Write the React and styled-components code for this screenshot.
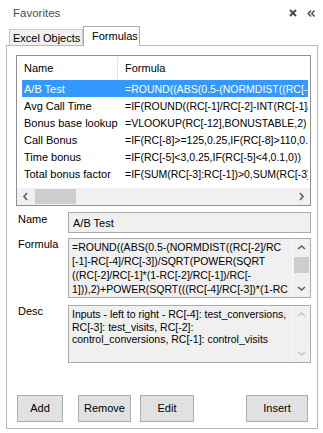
import React from "react";
import styled, { createGlobalStyle } from "styled-components";

const GlobalStyle = createGlobalStyle`
  html, body {
    margin: 0;
    padding: 0;
    background: #ffffff;
  }
  body {
    font-family: "Liberation Sans", Arial, sans-serif;
    font-size: 11px;
    color: #000;
  }
`;

const Window = styled.div`
  width: 323px;
  height: 433px;
  display: flex;
  flex-direction: column;
  background: #ffffff;
  overflow: hidden;
`;

const TitleBar = styled.div`
  height: 26px;
  display: flex;
  align-items: center;
  padding: 0 8px 0 13px;
`;

const Title = styled.span`
  flex: 1;
  font-size: 11.5px;
  color: #4d4d4d;
`;

const TitleIcon = styled.svg`
  display: block;
  margin-left: ${(p) => p.$gap || 0}px;
`;

const TabStrip = styled.div`
  height: 19px;
  display: flex;
  align-items: flex-end;
  padding-left: 9px;
`;

const Tab = styled.div`
  box-sizing: border-box;
  width: ${(p) => p.$width}px;
  height: ${(p) => (p.$active ? 20 : 16)}px;
  margin-bottom: ${(p) => (p.$active ? -1 : 0)}px;
  border: 1px solid ${(p) => (p.$active ? "#acacac" : "#c9c9c9")};
  border-bottom: none;
  background: ${(p) => (p.$active ? "#ffffff" : "#f0f0f0")};
  display: flex;
  align-items: center;
  padding-left: ${(p) => (p.$active ? 8 : 3)}px;
  padding-bottom: ${(p) => (p.$active ? 1 : 0)}px;
  font-size: 11px;
  color: #000;
  position: relative;
  z-index: ${(p) => (p.$active ? 1 : 0)};
  white-space: nowrap;
`;

const Panel = styled.div`
  box-sizing: border-box;
  margin: 0 5px 0 6px;
  height: 384px;
  border: 1px solid #b9b9b9;
  padding: 9px 6px 6px 9px;
  display: flex;
  flex-direction: column;
`;

const ListView = styled.div`
  box-sizing: border-box;
  width: 295px;
  height: 151px;
  border: 1px solid #8f8f8f;
  background: #fff;
  display: flex;
  flex-direction: column;
`;

const ListBody = styled.div`
  flex: 1;
  padding: 0 2px 0 5px;
  overflow: hidden;
`;

const HeaderRow = styled.div`
  height: 24px;
  display: flex;
  align-items: center;
`;

const HeaderCell = styled.div`
  box-sizing: border-box;
  width: ${(p) => (p.$first ? "96px" : "auto")};
  flex: ${(p) => (p.$first ? "none" : 1)};
  height: 23px;
  display: flex;
  align-items: center;
  padding-left: ${(p) => (p.$first ? 2 : 7)}px;
  border-right: ${(p) => (p.$first ? "1px solid #e5e5e5" : "none")};
`;

const Row = styled.div`
  height: 17px;
  display: flex;
  align-items: center;
  background: ${(p) => (p.$selected ? "#3399ff" : "transparent")};
  color: ${(p) => (p.$selected ? "#ffffff" : "#000000")};
  white-space: nowrap;
  overflow: hidden;
`;

const Cell = styled.div`
  box-sizing: border-box;
  width: ${(p) => (p.$first ? "96px" : "auto")};
  flex: ${(p) => (p.$first ? "none" : 1)};
  padding-left: ${(p) => (p.$first ? 2 : 7)}px;
  font-size: ${(p) => (p.$first ? 11 : 10.5)}px;
  overflow: hidden;
  white-space: nowrap;
`;

const HScroll = styled.div`
  height: 17px;
  display: flex;
  background: #f0f0f0;
`;

const ScrollButton = styled.div`
  width: 17px;
  height: 17px;
  flex: none;
  display: flex;
  align-items: center;
  justify-content: center;
`;

const HTrack = styled.div`
  flex: 1;
  display: flex;
  align-items: center;
`;

const HThumb = styled.div`
  width: 41px;
  height: 15px;
  margin-left: 1px;
  background: #cdcdcd;
`;

const FieldGrid = styled.div`
  display: grid;
  grid-template-columns: 52px 243px;
  margin-top: ${(p) => p.$top || 0}px;
`;

const Label = styled.div`
  padding-left: 2px;
  padding-top: ${(p) => p.$top || 0}px;
  line-height: 13px;
`;

const TextBox = styled.div`
  box-sizing: border-box;
  height: ${(p) => p.$height}px;
  border: 1px solid #acacac;
  background: #f0f0f0;
  display: flex;
`;

const SingleLine = styled.div`
  flex: 1;
  padding-left: 4px;
  display: flex;
  align-items: center;
  white-space: nowrap;
`;

const MultiText = styled.div`
  flex: 1;
  padding: ${(p) => p.$pad}px 0 0 3px;
  font-size: 10.5px;
  line-height: ${(p) => p.$lh}px;
  white-space: pre;
  overflow: hidden;
`;

const VScroll = styled.div`
  width: 17px;
  flex: none;
  display: flex;
  flex-direction: column;
  background: #f0f0f0;
  border-left: 1px solid #fafafa;
`;

const VTrack = styled.div`
  flex: 1;
  display: flex;
  justify-content: center;
`;

const VThumb = styled.div`
  width: 15px;
  height: 16px;
  margin-top: 1px;
  background: #cdcdcd;
`;

const ButtonRow = styled.div`
  margin-top: auto;
  display: flex;
`;

const Button = styled.div`
  box-sizing: border-box;
  width: ${(p) => p.$width}px;
  height: 27px;
  margin-left: ${(p) => p.$left}px;
  border: 1px solid #adadad;
  background: #e1e1e1;
  display: flex;
  align-items: center;
  justify-content: center;
  padding-bottom: 2px;
`;

function Chevron({ dir, color = "#606060" }) {
  const pts = {
    left: "5,1 2,4.5 5,8",
    right: "2,1 5,4.5 2,8",
    up: "1,5 4.5,2 8,5",
    down: "1,2 4.5,5 8,2",
  }[dir];
  const horizontal = dir === "left" || dir === "right";
  return (
    <svg
      width={horizontal ? 7 : 9}
      height={horizontal ? 9 : 7}
      viewBox={horizontal ? "0 0 7 9" : "0 0 9 7"}
    >
      <polyline points={pts} fill="none" stroke={color} strokeWidth="1.6" />
    </svg>
  );
}

const formulas = [
  ["A/B Test", "=ROUND((ABS(0.5-(NORMDIST((RC[-2]/RC[-1]-RC[-4]/RC[-3])"],
  ["Avg Call Time", "=IF(ROUND((RC[-1]/RC[-2]-INT(RC[-1]/RC[-2]))"],
  ["Bonus base lookup", "=VLOOKUP(RC[-12],BONUSTABLE,2)"],
  ["Call Bonus", "=IF(RC[-8]>=125,0.25,IF(RC[-8]>110,0.1,0))"],
  ["Time bonus", "=IF(RC[-5]<3,0.25,IF(RC[-5]<4,0.1,0))"],
  ["Total bonus factor", "=IF(SUM(RC[-3]:RC[-1])>0,SUM(RC[-3]:RC[-1]),0)"],
];

const formulaLines = [
  "=ROUND((ABS(0.5-(NORMDIST((RC[-2]/RC",
  "[-1]-RC[-4]/RC[-3])/SQRT(POWER(SQRT",
  "((RC[-2]/RC[-1]*(1-RC[-2]/RC[-1])/RC[-",
  "1])),2)+POWER(SQRT(((RC[-4]/RC[-3])*(1-RC",
];

const descLines = [
  "Inputs - left to right - RC[-4]: test_conversions,",
  "RC[-3]: test_visits, RC[-2]:",
  "control_conversions, RC[-1]: control_visits",
];

export default function App() {
  return (
    <>
      <GlobalStyle />
      <Window>
        <TitleBar>
          <Title>Favorites</Title>
          <TitleIcon width="8" height="8" viewBox="0 0 8 8">
            <path d="M1 1 L7 7 M7 1 L1 7" stroke="#4a4a4a" strokeWidth="2" />
          </TitleIcon>
          <TitleIcon $gap={10} width="8" height="7" viewBox="0 0 8 7">
            <polyline points="4,0.5 1.2,3.5 4,6.5" fill="none" stroke="#4a4a4a" strokeWidth="1.4" />
            <polyline points="7.5,0.5 4.7,3.5 7.5,6.5" fill="none" stroke="#4a4a4a" strokeWidth="1.4" />
          </TitleIcon>
        </TitleBar>
        <TabStrip>
          <Tab $width={74}>Excel Objects</Tab>
          <Tab $width={57} $active>
            Formulas
          </Tab>
        </TabStrip>
        <Panel>
          <ListView>
            <ListBody>
              <HeaderRow>
                <HeaderCell $first>Name</HeaderCell>
                <HeaderCell>Formula</HeaderCell>
              </HeaderRow>
              {formulas.map(([name, formula], i) => (
                <Row key={name} $selected={i === 0}>
                  <Cell $first>{name}</Cell>
                  <Cell>{formula}</Cell>
                </Row>
              ))}
            </ListBody>
            <HScroll>
              <ScrollButton>
                <Chevron dir="left" />
              </ScrollButton>
              <HTrack>
                <HThumb />
              </HTrack>
              <ScrollButton>
                <Chevron dir="right" />
              </ScrollButton>
            </HScroll>
          </ListView>

          <FieldGrid $top={6}>
            <Label $top={1}>Name</Label>
            <TextBox $height={21}>
              <SingleLine>A/B Test</SingleLine>
            </TextBox>
          </FieldGrid>

          <FieldGrid $top={5}>
            <Label $top={0}>Formula</Label>
            <TextBox $height={60}>
              <MultiText $pad={1} $lh={14}>
                {formulaLines.join("\n")}
              </MultiText>
              <VScroll>
                <ScrollButton>
                  <Chevron dir="up" />
                </ScrollButton>
                <VTrack>
                  <VThumb />
                </VTrack>
                <ScrollButton>
                  <Chevron dir="down" />
                </ScrollButton>
              </VScroll>
            </TextBox>
          </FieldGrid>

          <FieldGrid $top={7}>
            <Label $top={0}>Desc</Label>
            <TextBox $height={58}>
              <MultiText $pad={2} $lh={12.5}>
                {descLines.join("\n")}
              </MultiText>
              <VScroll>
                <ScrollButton>
                  <Chevron dir="up" color="#c2c2c2" />
                </ScrollButton>
                <VTrack />
                <ScrollButton>
                  <Chevron dir="down" color="#c2c2c2" />
                </ScrollButton>
              </VScroll>
            </TextBox>
          </FieldGrid>

          <ButtonRow>
            <Button $width={46} $left={1}>Add</Button>
            <Button $width={53} $left={15}>Remove</Button>
            <Button $width={54} $left={9}>Edit</Button>
            <Button $width={62} $left={52}>Insert</Button>
          </ButtonRow>
        </Panel>
      </Window>
    </>
  );
}
